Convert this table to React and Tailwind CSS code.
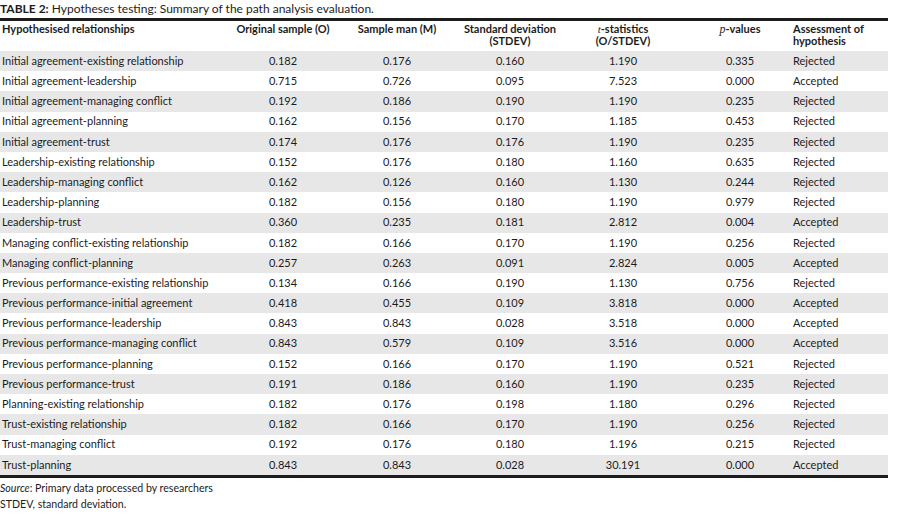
import React from 'react';

const rows = [
  ['Initial agreement-existing relationship', '0.182', '0.176', '0.160', '1.190', '0.335', 'Rejected'],
  ['Initial agreement-leadership', '0.715', '0.726', '0.095', '7.523', '0.000', 'Accepted'],
  ['Initial agreement-managing conflict', '0.192', '0.186', '0.190', '1.190', '0.235', 'Rejected'],
  ['Initial agreement-planning', '0.162', '0.156', '0.170', '1.185', '0.453', 'Rejected'],
  ['Initial agreement-trust', '0.174', '0.176', '0.176', '1.190', '0.235', 'Rejected'],
  ['Leadership-existing relationship', '0.152', '0.176', '0.180', '1.160', '0.635', 'Rejected'],
  ['Leadership-managing conflict', '0.162', '0.126', '0.160', '1.130', '0.244', 'Rejected'],
  ['Leadership-planning', '0.182', '0.156', '0.180', '1.190', '0.979', 'Rejected'],
  ['Leadership-trust', '0.360', '0.235', '0.181', '2.812', '0.004', 'Accepted'],
  ['Managing conflict-existing relationship', '0.182', '0.166', '0.170', '1.190', '0.256', 'Rejected'],
  ['Managing conflict-planning', '0.257', '0.263', '0.091', '2.824', '0.005', 'Accepted'],
  ['Previous performance-existing relationship', '0.134', '0.166', '0.190', '1.130', '0.756', 'Rejected'],
  ['Previous performance-initial agreement', '0.418', '0.455', '0.109', '3.818', '0.000', 'Accepted'],
  ['Previous performance-leadership', '0.843', '0.843', '0.028', '3.518', '0.000', 'Accepted'],
  ['Previous performance-managing conflict', '0.843', '0.579', '0.109', '3.516', '0.000', 'Accepted'],
  ['Previous performance-planning', '0.152', '0.166', '0.170', '1.190', '0.521', 'Rejected'],
  ['Previous performance-trust', '0.191', '0.186', '0.160', '1.190', '0.235', 'Rejected'],
  ['Planning-existing relationship', '0.182', '0.176', '0.198', '1.180', '0.296', 'Rejected'],
  ['Trust-existing relationship', '0.182', '0.166', '0.170', '1.190', '0.256', 'Rejected'],
  ['Trust-managing conflict', '0.192', '0.176', '0.180', '1.196', '0.215', 'Rejected'],
  ['Trust-planning', '0.843', '0.843', '0.028', '30.191', '0.000', 'Accepted'],
];

const grid = 'grid grid-cols-[236px_94px_134px_92px_134px_100px_98px]';

const Center = ({ children }) => (
  <div className="flex justify-center whitespace-nowrap">{children}</div>
);

const App = () => {
  return (
    <div className="w-[898px] h-[519px] bg-white text-[#1c1c1c] font-['Lato',sans-serif] text-[11px]">
      <div className="pt-[2px] text-[12px] leading-[14px] whitespace-nowrap">
        <span className="font-bold">TABLE 2:</span> Hypotheses testing: Summary of the path analysis evaluation.
      </div>

      <div className="w-[888px] mt-[2px] border-t-[3px] border-b-[3px] border-[#1c1c1c]">
        {/* Header */}
        <div className={`${grid} h-[30px] pt-[2px] leading-[12px] font-bold`}>
          <div className="pl-[2px] whitespace-nowrap">Hypothesised relationships</div>
          <Center>Original sample (O)</Center>
          <Center>Sample man (M)</Center>
          <div className="flex flex-col items-center whitespace-nowrap">
            <span>Standard deviation</span>
            <span>(STDEV)</span>
          </div>
          <div className="flex flex-col items-center whitespace-nowrap">
            <span>
              <i className="font-['Liberation_Serif',serif] font-normal">t</i>-statistics
            </span>
            <span>(O/STDEV)</span>
          </div>
          <Center>
            <span>
              <i className="font-['Liberation_Serif',serif] font-normal text-[12px]">p</i>-values
            </span>
          </Center>
          <div className="pl-[3px] whitespace-nowrap">
            Assessment of
            <br />
            hypothesis
          </div>
        </div>

        {/* Rows */}
        {rows.map((r, i) => (
          <div
            key={i}
            className={`${grid} h-[20.2px] items-center ${i % 2 === 0 ? 'bg-[#e7e7e7]' : 'bg-white'}`}
          >
            <div className="pl-[2px] whitespace-nowrap">{r[0]}</div>
            <Center>{r[1]}</Center>
            <Center>{r[2]}</Center>
            <Center>{r[3]}</Center>
            <Center>{r[4]}</Center>
            <Center>{r[5]}</Center>
            <div className="pl-[3px] whitespace-nowrap">{r[6]}</div>
          </div>
        ))}
      </div>

      <div className="pt-[2px] text-[10.6px] leading-[16px]">
        <div>
          <i>Source</i>: Primary data processed by researchers
        </div>
        <div>STDEV, standard deviation.</div>
      </div>
    </div>
  );
};

export default App;
